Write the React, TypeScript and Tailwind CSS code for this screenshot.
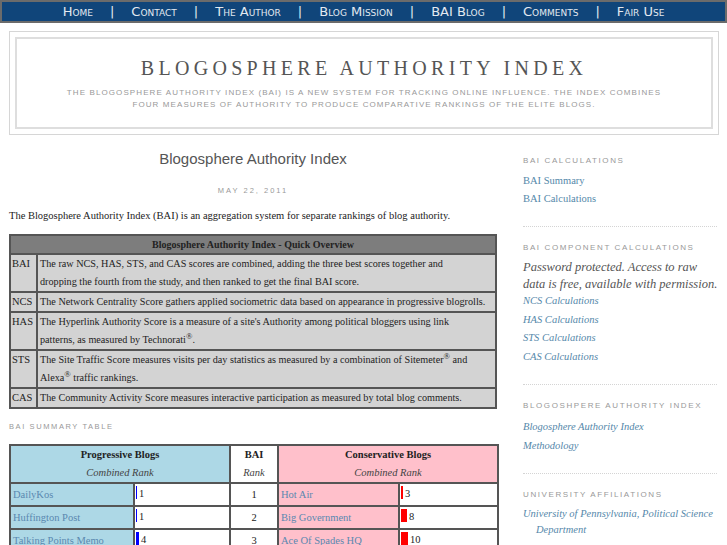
import React from 'react';

const serif = "font-['Liberation_Serif',serif]";
const sans = "font-['Liberation_Sans',Arial,sans-serif]";

const navItems = ['Home', 'Contact', 'The Author', 'Blog Mission', 'BAI Blog', 'Comments', 'Fair Use'];

const overview = [
    { code: 'BAI', text: <>The raw NCS, HAS, STS, and CAS scores are combined, adding the three best scores together and<br />dropping the fourth from the study, and then ranked to get the final BAI score.</> },
    { code: 'NCS', text: <>The Network Centrality Score gathers applied sociometric data based on appearance in progressive blogrolls.</> },
    { code: 'HAS', text: <>The Hyperlink Authority Score is a measure of a site's Authority among political bloggers using link<br />patterns, as measured by Technorati<sup>®</sup>.</> },
    { code: 'STS', text: <>The Site Traffic Score measures visits per day statistics as measured by a combination of Sitemeter<sup>®</sup> and<br />Alexa<sup>®</sup> traffic rankings.</> },
    { code: 'CAS', text: <>The Community Activity Score measures interactive participation as measured by total blog comments.</> },
];

const summary = [
    { prog: 'DailyKos', pr: 1, pw: 1, rank: 1, cons: 'Hot Air', cr: 3, cw: 2 },
    { prog: 'Huffington Post', pr: 1, pw: 1, rank: 2, cons: 'Big Government', cr: 8, cw: 6 },
    { prog: 'Talking Points Memo', pr: 4, pw: 3, rank: 3, cons: 'Ace Of Spades HQ', cr: 10, cw: 7 },
];

function SideHeading({ children }: { children: React.ReactNode }) {
    return <h3 className={`${sans} text-[8px] tracking-[1.6px] uppercase text-[#999] mb-[5px]`}>{children}</h3>;
}

function Divider() {
    return <div className="border-t border-dotted border-[#d4d4d4] mt-[18px] mb-[15px]" />;
}

export default function App() {
    return (
        <div className="bg-white min-h-[545px] w-[727px] overflow-hidden">
            {/* top nav */}
            <div className="bg-[#10457a] border-2 border-[#6b6b6b] h-[23px] flex items-center justify-center">
                {navItems.map((item, i) => (
                    <React.Fragment key={item}>
                        {i > 0 && <span className="text-[#e3e9f0] text-[13px] px-[17px] font-['DejaVu_Sans',sans-serif]">|</span>}
                        <span className="text-[#e3e9f0] text-[13px] [font-variant:small-caps] font-['DejaVu_Sans',sans-serif] leading-none">{item}</span>
                    </React.Fragment>
                ))}
            </div>

            {/* header */}
            <div className="mx-[9px] mt-[8px] border border-[#d6d6d6] p-[5px] w-[710px]">
                <div className="border-2 border-[#dedede] h-[92px] flex flex-col items-center pt-[17px]">
                    <h1 className={`${serif} text-[20px] tracking-[4.3px] text-[#555] leading-[24px]`}>BLOGOSPHERE AUTHORITY INDEX</h1>
                    <p className={`${sans} text-[8px] tracking-[1.1px] text-[#999] leading-[12px] text-center w-[606px] mt-[7px]`}>
                        THE BLOGOSPHERE AUTHORITY INDEX (BAI) IS A NEW SYSTEM FOR TRACKING ONLINE INFLUENCE. THE INDEX COMBINES FOUR MEASURES OF AUTHORITY TO PRODUCE COMPARATIVE RANKINGS OF THE ELITE BLOGS.
                    </p>
                </div>
            </div>

            <div className="flex px-[9px] mt-[14px]">
                {/* main column */}
                <div className="w-[488px]">
                    <h2 className={`${sans} text-[15px] text-[#555] text-center leading-[20px]`}>Blogosphere Authority Index</h2>
                    <div className={`${sans} text-[7.5px] tracking-[2px] text-[#999] text-center mt-[16px]`}>MAY 22, 2011</div>
                    <p className={`${serif} text-[10.5px] text-[#222] mt-[12px]`}>The Blogosphere Authority Index (BAI) is an aggregation system for separate rankings of blog authority.</p>

                    <table className={`${serif} w-[488px] mt-[10px] border-collapse border-2 border-[#555] text-[10.5px] text-[#222]`}>
                        <thead>
                            <tr>
                                <th colSpan={2} className="bg-[#7d7d7d] border-2 border-[#555] h-[19px] font-bold text-[10px]">Blogosphere Authority Index - Quick Overview</th>
                            </tr>
                        </thead>
                        <tbody>
                            {overview.map(row => (
                                <tr key={row.code} className="bg-[#d3d3d3]">
                                    <td className="border-2 border-[#555] align-top px-[1px] w-[27px] text-[10.5px] leading-[18px]">{row.code}</td>
                                    <td className="border-2 border-[#555] px-[2px] text-[10.2px] leading-[18px] [&_sup]:text-[8.5px]">{row.text}</td>
                                </tr>
                            ))}
                        </tbody>
                    </table>

                    <div className={`${sans} text-[7.5px] tracking-[1.6px] text-[#999] mt-[12px]`}>BAI SUMMARY TABLE</div>

                    <table className={`${serif} w-[488px] table-fixed mt-[12px] border-collapse border-2 border-[#555] text-[10.5px] text-[#222]`}>
                        <colgroup>
                            <col className="w-[124px]" />
                            <col className="w-[96px]" />
                            <col className="w-[48px]" />
                            <col className="w-[121px]" />
                            <col className="w-[99px]" />
                        </colgroup>
                        <thead>
                            <tr className="leading-[18px]">
                                <th colSpan={2} className="bg-[#add8e6] border-2 border-[#555]">
                                    <div className="font-bold">Progressive Blogs</div>
                                    <div className="italic font-normal text-[#444]">Combined Rank</div>
                                </th>
                                <th className="bg-white border-2 border-[#555]">
                                    <div className="font-bold">BAI</div>
                                    <div className="italic font-normal text-[#444]">Rank</div>
                                </th>
                                <th colSpan={2} className="bg-[#ffc0cb] border-2 border-[#555]">
                                    <div className="font-bold">Conservative Blogs</div>
                                    <div className="italic font-normal text-[#444]">Combined Rank</div>
                                </th>
                            </tr>
                        </thead>
                        <tbody>
                            {summary.map(r => (
                                <tr key={r.rank} className="h-[23px]">
                                    <td className="bg-[#add8e6] border-2 border-[#555] px-[2px] text-[#5a88b0] whitespace-nowrap">{r.prog}</td>
                                    <td className="bg-white border-2 border-[#555] px-[1px]">
                                        <span className="inline-flex items-end gap-[2px]">
                                            <span className="bg-[#0000ff] h-[13px] inline-block" style={{ width: r.pw }} />
                                            <span className="leading-[11px]">{r.pr}</span>
                                        </span>
                                    </td>
                                    <td className="bg-white border-2 border-[#555] text-center">{r.rank}</td>
                                    <td className="bg-[#ffc0cb] border-2 border-[#555] px-[2px] text-[#5a88b0] whitespace-nowrap">{r.cons}</td>
                                    <td className="bg-white border-2 border-[#555] px-[1px]">
                                        <span className="inline-flex items-end gap-[2px]">
                                            <span className="bg-[#ff0000] h-[13px] inline-block" style={{ width: r.cw }} />
                                            <span className="leading-[11px]">{r.cr}</span>
                                        </span>
                                    </td>
                                </tr>
                            ))}
                        </tbody>
                    </table>
                </div>

                {/* sidebar */}
                <div className="ml-[26px] w-[194px] pt-[6px]">
                    <SideHeading>BAI Calculations</SideHeading>
                    <ul className={`${serif} text-[10.5px] text-[#5588aa] leading-[18px]`}>
                        <li>BAI Summary</li>
                        <li>BAI Calculations</li>
                    </ul>
                    <Divider />

                    <SideHeading>BAI Component Calculations</SideHeading>
                    <p className={`${serif} italic text-[12.5px] leading-[17px] text-[#555] whitespace-nowrap mt-[2px]`}>Password protected. Access to raw<br />data is free, available with permission.</p>
                    <ul className={`${serif} italic text-[10.5px] text-[#5588aa] leading-[18.5px] -mt-[1px]`}>
                        <li>NCS Calculations</li>
                        <li>HAS Calculations</li>
                        <li>STS Calculations</li>
                        <li>CAS Calculations</li>
                    </ul>
                    <Divider />

                    <SideHeading>Blogoshpere Authority Index</SideHeading>
                    <ul className={`${serif} italic text-[10.5px] text-[#5588aa] leading-[19px]`}>
                        <li>Blogosphere Authority Index</li>
                        <li>Methodology</li>
                    </ul>
                    <Divider />

                    <SideHeading>University Affiliations</SideHeading>
                    <p className={`${serif} italic text-[10.5px] text-[#5588aa] leading-[16px] pl-[13px] -indent-[13px]`}>University of Pennsylvania, Political Science Department</p>
                </div>
            </div>
        </div>
    );
}
